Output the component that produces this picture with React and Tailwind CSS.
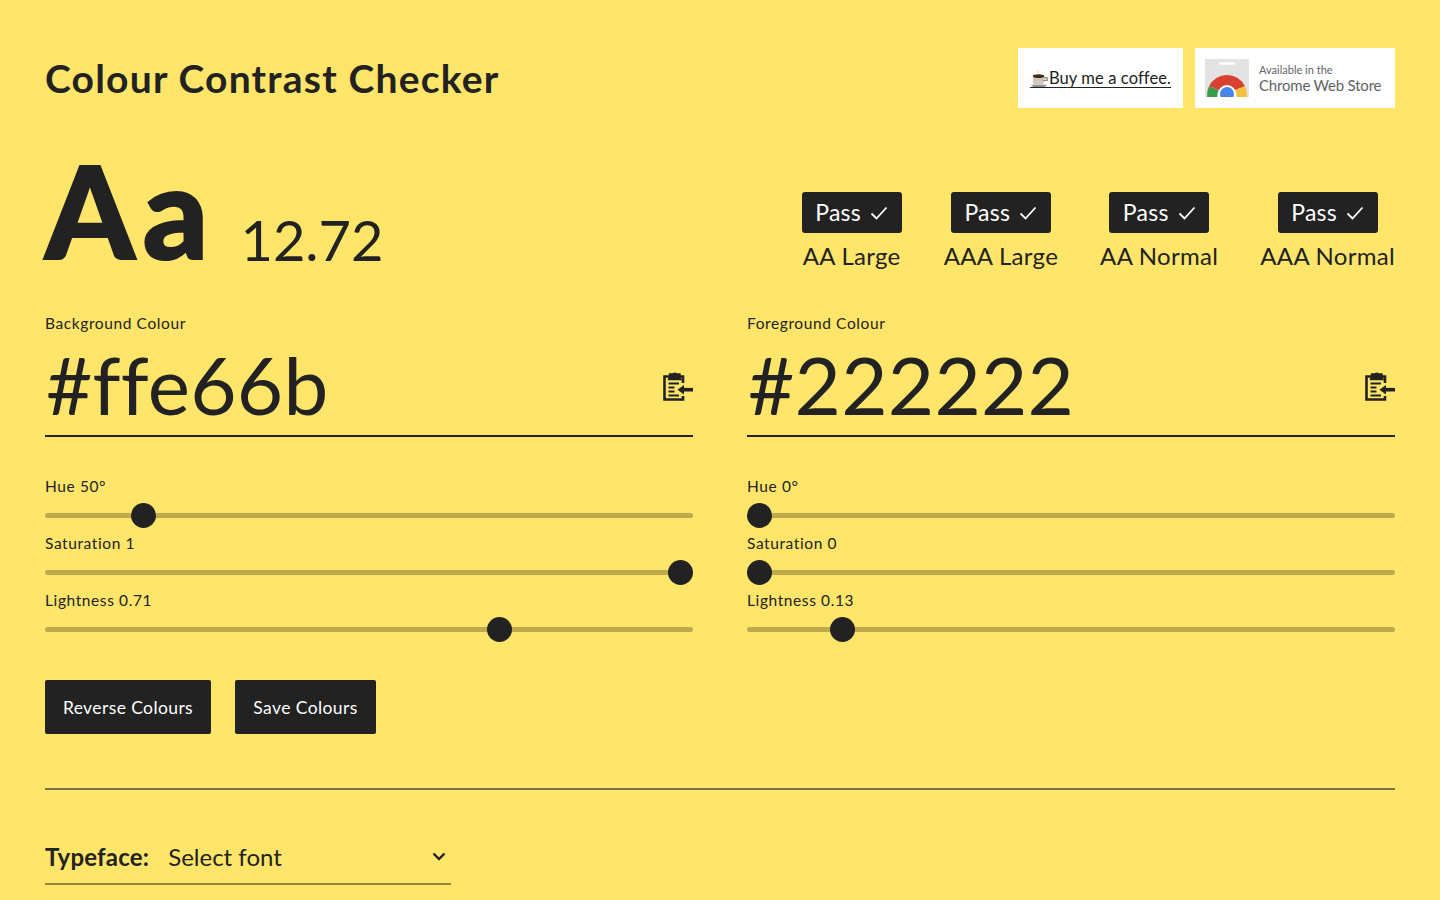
const font = { fontFamily: '"Lato", "Noto Sans", sans-serif' }

const results = ['AA Large', 'AAA Large', 'AA Normal', 'AAA Normal']

const colours = [
  {
    title: 'Background Colour',
    value: '#ffe66b',
    sliders: [
      { label: 'Hue 50°', pct: 49.86 / 360 },
      { label: 'Saturation 1', pct: 1 },
      { label: 'Lightness 0.71', pct: 0.71 },
    ],
  },
  {
    title: 'Foreground Colour',
    value: '#222222',
    sliders: [
      { label: 'Hue 0°', pct: 0 },
      { label: 'Saturation 0', pct: 0 },
      { label: 'Lightness 0.13', pct: 34 / 255 },
    ],
  },
]

function PasteIcon() {
  return (
    <svg width="30" height="30" viewBox="0 0 30 30" fill="none" stroke="#222222" strokeWidth="2.6">
      <path d="M20 12V5.500H1.500v23H20V25" />
      <path d="M6.500 6V3h3.500a2.200 2.200 0 0 1 3.500 0H17v3l1 2.500H5.500z" fill="#222222" strokeWidth="1.400" />
      <path d="M5.500 12.500H16M5.500 16.500h6M5.500 20.500h6M5.500 24.500H16" strokeWidth="2" />
      <path d="M30 18.700H19" strokeWidth="3.600" />
      <path d="M21 14 14.500 18.700 21 23.400z" fill="#222222" stroke="none" />
    </svg>
  )
}

function CheckIcon() {
  return (
    <svg width="18" height="14" viewBox="0 0 18 14" fill="none" stroke="#ffffff" strokeWidth="1.8">
      <path d="M1.500 7.500 6.500 12.500 16.500 1.500" />
    </svg>
  )
}

function Cup() {
  return (
    <svg width="19" height="20" viewBox="0 0 20 20" className="shrink-0">
      <path d="M8 1c-1 1 1 2 0 3" fill="none" stroke="#d0d0d0" strokeWidth="1" />
      <path d="M1 16h17l-2.500 2.500h-12z" fill="#8f8f8f" />
      <path d="M3 7h12v5a4 4 0 0 1-4 4H7a4 4 0 0 1-4-4z" fill="#cfc9bd" />
      <path d="M14.500 8.500h3.500v3h-4" fill="none" stroke="#8a8178" strokeWidth="1.300" />
      <ellipse cx="9" cy="7" rx="6" ry="2" fill="#3f2a1d" />
    </svg>
  )
}

function ChromeLogo() {
  return (
    <svg width="44" height="38" viewBox="0 0 44 38" className="shrink-0">
      <path d="M0 0h44v38H0z" fill="#e3e3e3" />
      <path d="M15 4.500h14" stroke="#ffffff" strokeWidth="2.500" strokeLinecap="round" />
      <path d="M4 27.300A20 20 0 0 0 2 38h10a10 10 0 0 1 2-7z" fill="#3a9c4b" />
      <path d="M4 27.300a20 20 0 0 1 36 0L30 31a10 10 0 0 0-16 0z" fill="#d8402f" />
      <path d="M40 27.300A20 20 0 0 1 42 38H32a10 10 0 0 0-2-7z" fill="#f5c33b" />
      <circle cx="22" cy="35" r="9" fill="#ffffff" />
      <circle cx="22" cy="35" r="7" fill="#4a86e8" />
    </svg>
  )
}

function Slider({ label, pct }) {
  return (
    <div className="h-[57px]">
      <div className="text-[15.5px] leading-[20px] text-[#222222] tracking-[0.6px]">{label}</div>
      <div className="relative mt-[7px] h-[25px]">
        <div className="absolute left-0 right-0 top-[10px] h-[5px] rounded-full bg-[#bdaa4e]" />
        <div
          className="absolute top-0 h-[25px] w-[25px] rounded-full bg-[#222222]"
          style={{ left: `calc((100% - 25px) * ${pct})` }}
        />
      </div>
    </div>
  )
}

function ColourColumn({ title, value, sliders }) {
  return (
    <div>
      <div className="text-[15.5px] leading-[20px] text-[#222222] tracking-[0.6px]">{title}</div>
      <div className="mt-[3px] flex h-[101px] items-center justify-between border-b-2 border-[#222222] pl-[1px]">
        <span className="mb-[4px] text-[80px] leading-[90px] text-[#222222] tracking-[0.2px]">{value}</span>
        <PasteIcon />
      </div>
      <div className="mt-[39px]">
        {sliders.map((s) => (
          <Slider key={s.label} {...s} />
        ))}
      </div>
    </div>
  )
}

export default function App() {
  return (
    <div className="h-screen overflow-hidden bg-[#ffe66b] px-[45px] pt-[48px] text-[#222222]" style={font}>
      <header className="flex h-[60px] items-center justify-between">
        <h1 className="text-[39px] font-bold leading-[60px] text-[#222222] tracking-[1.2px]">Colour Contrast Checker</h1>
        <div className="flex gap-[12px]">
          <a className="flex h-[60px] w-[165px] items-center justify-center bg-white text-[16.5px] text-[#222222]">
            <span className="mt-[2px] flex h-[17px] items-center border-b border-[#222222] tracking-[0.1px]">
              <Cup />
              <span>Buy me a coffee.</span>
            </span>
          </a>
          <a className="flex h-[60px] w-[200px] items-center gap-[10px] bg-white pl-[10px]">
            <ChromeLogo />
            <div className="text-[#5f6368]">
              <div className="text-[11px] leading-[13px]">Available in the</div>
              <div className="text-[15px] leading-[18px] tracking-[-0.2px]">Chrome Web Store</div>
            </div>
          </a>
        </div>
      </header>

      <section className="mt-[48px] flex h-[116px] items-end justify-between">
        <div className="flex items-end">
          <span className="mb-[6px] text-[128px] font-black leading-[112px] text-[#222222] tracking-[8px] [-webkit-text-stroke:2px_#222222]">Aa</span>
          <span className="mb-[2px] ml-[24px] text-[56px] leading-[60px]">12.72</span>
        </div>
        <div className="flex gap-[42px] pb-[1px]">
          {results.map((label) => (
            <div key={label} className="flex flex-col items-center">
              <div className="flex h-[41px] w-[100px] items-center justify-center gap-[9px] rounded-[3px] bg-[#222222] text-[23px] tracking-[0.3px] text-white">
                Pass <CheckIcon />
              </div>
              <div className="mt-[8px] whitespace-nowrap text-[24px] leading-[30px] tracking-[0.3px]">{label}</div>
            </div>
          ))}
        </div>
      </section>

      <section className="mt-[41px] grid grid-cols-2 gap-[54px]">
        {colours.map((c) => (
          <ColourColumn key={c.title} {...c} />
        ))}
      </section>

      <div className="mt-[33px] flex gap-[24px]">
        <button className="h-[54px] w-[166px] rounded-[2px] bg-[#222222] pt-[2px] text-[17.5px] tracking-[0.4px] text-white">Reverse Colours</button>
        <button className="h-[54px] w-[141px] rounded-[2px] bg-[#222222] pt-[2px] text-[17.5px] tracking-[0.4px] text-white">Save Colours</button>
      </div>

      <hr className="mt-[54px] border-t-2 border-[#77704f]" />

      <div className="mt-[44px] flex h-[51px] w-[406px] items-center border-b-2 border-[#968637] pb-[4px]">
        <span className="text-[24px] font-bold tracking-[0.2px]">Typeface:</span>
        <span className="ml-[19px] flex-1 text-[24px]">Select font</span>
        <svg width="14" height="10" viewBox="0 0 14 10" fill="none" stroke="#222222" strokeWidth="2.4" className="mr-[5px]">
          <path d="M1.500 1.500 7 7l5.500-5.500" />
        </svg>
      </div>
    </div>
  )
}
